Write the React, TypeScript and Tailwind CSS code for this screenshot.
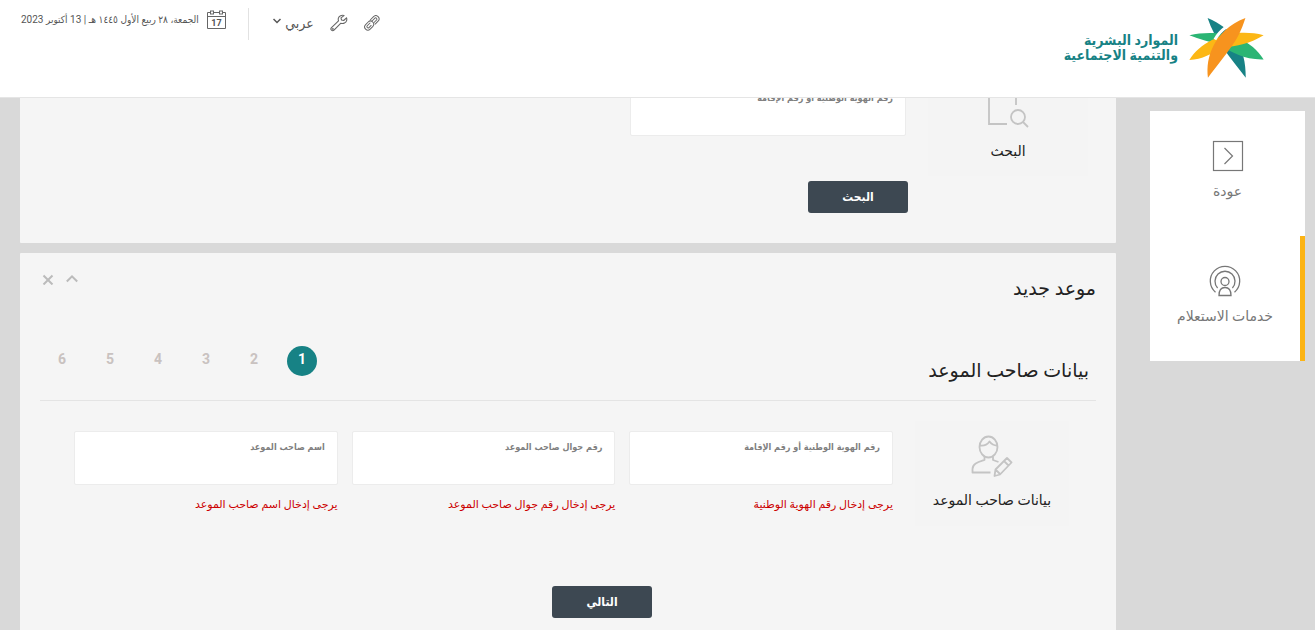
import type { ReactNode } from "react";

const steps = [1, 2, 3, 4, 5, 6];

const fields = [
  { id: "national-id", label: "رقم الهوية الوطنية أو رقم الإقامة", error: "يرجى إدخال رقم الهوية الوطنية" },
  { id: "mobile", label: "رقم جوال صاحب الموعد", error: "يرجى إدخال رقم جوال صاحب الموعد" },
  { id: "owner-name", label: "اسم صاحب الموعد", error: "يرجى إدخال اسم صاحب الموعد" },
];

function Logo() {
  return (
    <svg viewBox="416 50 224 184" className="w-[75px] h-[61px]" aria-hidden="true">
      <path d="M471 53C545 84 588 140 586 233C540 172 492 120 471 53Z" fill="#178285" />
      <path d="M416 105C490 88 590 98 640 178C585 180 540 155 510 136C480 124 445 118 416 105Z" fill="#2bb574" />
      <path d="M416 180C455 115 550 82 640 105C600 130 560 138 515 142C485 160 455 178 416 180Z" fill="#fcb715" />
      <path d="M583 53C537 68 507 92 493 118" fill="none" stroke="#fff" strokeWidth="9" />
      <path d="M585 53C535 72 505 105 488 138C473 168 468 200 472 233C500 195 520 172 535 150C560 118 574 88 585 53Z" fill="#f7931e" />
    </svg>
  );
}

function LinkIcon() {
  return (
    <svg viewBox="0 0 16 16" className="w-4 h-4" fill="none" stroke="#666" strokeWidth="1" strokeLinecap="round">
      <g transform="rotate(-45 8 8)">
        <rect x="-.8" y="4.600" width="10" height="6.400" rx="3.200" />
        <path d="M6.600 6.600H2.400a1.300 1.300 0 0 0 0 2.500h3.200" />
        <path d="M9.200 4.600H13.600a3.200 3.200 0 0 1 0 6.400H9.500" />
        <path d="M9.800 6.600h3.800a1.300 1.300 0 0 1 0 2.500H9.800" />
      </g>
    </svg>
  );
}

function WrenchIcon() {
  return (
    <svg viewBox="0 0 18 18" className="w-[18px] h-[18px]" fill="none" stroke="#666" strokeWidth="1.1" strokeLinejoin="round">
      <path d="M14 1.6c-2.3-.9-4.900.2-5.600 2.500-.3 1-.2 1.900.1 2.700L1.500 13.700c-.7.7-.7 1.800 0 2.500s1.800.7 2.500 0l6.900-7c2.400.9 5.200-.4 5.800-2.900.2-.9.100-1.700-.2-2.500l-2.800 2.700-2.200-.5-.5-2.100z" />
      <circle cx="2.900" cy="14.900" r=".4" />
    </svg>
  );
}

function CalendarIcon() {
  return (
    <svg viewBox="0 0 19 20" className="w-[19px] h-5" fill="none" stroke="#666" strokeWidth="1">
      <path d="M3.500 2.500H.5v16h18v-16h-3M6.500 2.500h6M.5 6.500h18" />
      <rect x="3.500" y="1" width="3" height="3" />
      <rect x="12.500" y="1" width="3" height="3" />
      <text x="9.500" y="16" textAnchor="middle" fontSize="9" fontWeight="700" fill="#555" stroke="none" fontFamily="Roboto, sans-serif">17</text>
    </svg>
  );
}

function BackIcon() {
  return (
    <svg viewBox="0 0 32 32" className="w-8 h-8" fill="none" stroke="#777" strokeWidth="1.2">
      <rect x="1.500" y="1.500" width="29" height="29" />
      <path d="M12.500 8l8 8-8 8" />
    </svg>
  );
}

function InquiryIcon() {
  return (
    <svg viewBox="0 0 32 32" className="w-8 h-8" fill="none" stroke="#777" strokeWidth="1.300">
      <path d="M6.500 27.200a14.700 14.700 0 1 1 19 0" />
      <path d="M8.600 23a10 10 0 1 1 14.800 0" />
      <circle cx="16" cy="16.500" r="4" />
      <path d="M10 30.500c0-4.800 2.200-8 6-8s6 3.200 6 8z" />
    </svg>
  );
}

function SearchDocIcon() {
  return (
    <svg viewBox="0 0 42 42" className="w-[42px] h-[42px]" fill="none" stroke="#c4c4c4" strokeWidth="1.800">
      <path d="M20 38H2V2h18l9 9v8M20 2v9h9" />
      <circle cx="31" cy="31" r="7" />
      <path d="M36 36l5 5" />
    </svg>
  );
}

function UserEditIcon() {
  return (
    <svg viewBox="0 0 42 42" className="w-[42px] h-[42px]" fill="none" stroke="#c4c4c4" strokeWidth="1.800" strokeLinejoin="round">
      <ellipse cx="17.500" cy="12" rx="9" ry="10.500" />
      <path d="M9 10.500c3.500.5 7-.5 9.500-4 2 2.700 4.500 4 7.500 4" />
      <path d="M13.500 21.500v3.500c-6 2-12 3.500-12 9V37.500h18M22 21.500v3.500l5.500 2" />
      <path d="M23.500 41l1-6.500L36 23l4.500 4.500L29 39.500zM33 26l4.500 4.500M24.500 34.500l4.500 4.500" />
    </svg>
  );
}

function Field({ id, label, error }: { id: string; label: string; error?: string }) {
  return (
    <div>
      <div className="flex h-[54px] flex-col rounded-xs border border-[#ececec] bg-white px-3 pt-[7px]">
        <label htmlFor={id} className="font-['DejaVu_Sans_Condensed','DejaVu_Sans',sans-serif] text-[9px] leading-4 font-bold text-[#808080]">{label}</label>
        <input id={id} type="text" className="min-h-0 w-full flex-1 bg-transparent text-xs outline-none" />
      </div>
      {error && <p className="mt-[10px] text-[11px] leading-5 whitespace-nowrap text-[#cc0000]">{error}</p>}
    </div>
  );
}

function StepCard({ icon, title }: { icon: ReactNode; title: string }) {
  return (
    <div className="flex h-[105px] w-[154px] shrink-0 flex-col items-center bg-[#f4f4f4] pt-[14px]">
      {icon}
      <h3 className="mt-[13px] text-sm leading-5 whitespace-nowrap text-[#222]">{title}</h3>
    </div>
  );
}

function ActionButton({ children }: { children: ReactNode }) {
  return (
    <button type="button" className="h-8 w-[100px] rounded-[3px] bg-[#3d4852] font-['DejaVu_Sans_Condensed','DejaVu_Sans',sans-serif] text-xs font-bold text-white">
      {children}
    </button>
  );
}

export default function App() {
  return (
    <div dir="rtl" lang="ar" className="flex h-screen flex-col overflow-hidden bg-[#d9d9d9] font-['Roboto','DejaVu_Sans',sans-serif] text-[#222]">
      <header className="relative z-10 flex h-[98px] shrink-0 items-start justify-between border-b border-[#e5e5e5] bg-white pr-[51px] pl-[21px] font-['Roboto','DejaVu_Sans_Condensed','DejaVu_Sans',sans-serif]">
        <a href="#" className="flex items-start gap-[11px] pt-[17px]">
          <Logo />
          <span className="pt-4 text-sm leading-[15px] font-bold text-[#178285]">
            الموارد البشرية
            <br />
            والتنمية الاجتماعية
          </span>
        </a>
        <div className="flex items-start pt-2 text-[#555]">
          <div className="flex h-[30px] items-center gap-4">
            <a href="#" aria-label="روابط"><LinkIcon /></a>
            <a href="#" aria-label="أدوات"><WrenchIcon /></a>
            <div className="flex items-center gap-1">
              <select aria-label="اللغة" className="appearance-none bg-transparent text-sm outline-none">
                <option>عربي</option>
              </select>
              <svg viewBox="0 0 8 6" className="mb-1 h-[6px] w-2" fill="none" stroke="#555" strokeWidth="1.500">
                <path d="M.5 1L4 4.500 7.500 1" />
              </svg>
            </div>
          </div>
          <div className="mr-6 ml-[22px] h-8 w-px bg-[#e2e2e2]" />
          <div className="flex items-center gap-2">
            <CalendarIcon />
            <time dateTime="2023-10-13" className="text-[10px] leading-6 whitespace-nowrap">الجمعة، ٢٨ ربيع الأول ١٤٤٥ هـ | 13 أكتوبر 2023</time>
          </div>
        </div>
      </header>

      <div className="flex min-h-0 flex-1 items-start gap-[34px] pr-[10px] pl-5">
        <nav className="mt-[13px] w-[155px] shrink-0 bg-white text-sm text-[#777]">
          <a href="#" className="flex h-[125px] flex-col items-center pt-[29px]">
            <BackIcon />
            <span className="mt-[9px] leading-5">عودة</span>
          </a>
          <a href="#" className="flex h-[125px] flex-col items-center border-r-[5px] border-[#fcb415] pt-[29px]">
            <InquiryIcon />
            <span className="mt-[9px] leading-5">خدمات الاستعلام</span>
          </a>
        </nav>

        <main className="-mt-[45px] min-w-0 flex-1">
          <section className="mb-[10px] h-[190px] rounded-[1px] bg-[#f5f5f5] pr-7">
            <div className="flex items-start">
              <div className="mt-[19px] flex h-[104px] w-40 shrink-0 flex-col items-center bg-[#f4f4f4] pt-[14px]">
                <SearchDocIcon />
                <h3 className="mt-[13px] text-sm leading-5">البحث</h3>
              </div>
              <div className="mt-[29px] mr-[22px] w-[276px]">
                <Field id="search-id" label="رقم الهوية الوطنية أو رقم الإقامة" />
              </div>
            </div>
            <div className="mt-[5px] pr-[180px]">
              <ActionButton>البحث</ActionButton>
            </div>
          </section>

          <section className="h-[460px] rounded-[1px] bg-[#f5f5f5] px-5 pt-5">
            <div className="flex items-start justify-between">
              <h1 className="text-[19px] leading-8">موعد جديد</h1>
              <div className="flex gap-3 pl-[2px]">
                <button type="button" aria-label="طي" className="h-3 w-3">
                  <svg viewBox="0 0 12 12" fill="none" stroke="#bbb" strokeWidth="2"><path d="M.8 8.500L6 3.300l5.200 5.200" /></svg>
                </button>
                <button type="button" aria-label="إغلاق" className="h-3 w-3">
                  <svg viewBox="0 0 12 12" fill="none" stroke="#bbb" strokeWidth="2"><path d="M1.500 2.500l9 9M10.500 2.500l-9 9" /></svg>
                </button>
              </div>
            </div>

            <div className="mt-[41px] flex h-[55px] items-start justify-between border-b border-[#e4e4e4] px-[7px]">
              <h2 className="pt-[9px] text-[19px] leading-8">بيانات صاحب الموعد</h2>
              <ol className="flex gap-[18px]">
                {steps.map((step) => (
                  <li key={step}>
                    <button
                      type="button"
                      aria-current={step === 1 ? "step" : undefined}
                      className={step === 1
                        ? "h-[30px] w-[30px] rounded-full bg-[#178285] pb-1 text-sm font-bold text-white"
                        : "h-[30px] w-[30px] pb-1 text-sm font-bold text-[#c9c2c0]"}
                    >
                      {step}
                    </button>
                  </li>
                ))}
              </ol>
            </div>

            <form className="pt-5">
              <div className="flex items-start gap-[22px] pr-[27px] pl-[34px]">
                <StepCard icon={<UserEditIcon />} title="بيانات صاحب الموعد" />
                <div className="grid flex-1 grid-cols-3 gap-[14px] pt-[10px]">
                  {fields.map((field) => (
                    <Field key={field.id} {...field} />
                  ))}
                </div>
              </div>
              <div className="mt-[60px] flex justify-center pl-[68px]">
                <ActionButton>التالي</ActionButton>
              </div>
            </form>
          </section>
        </main>
      </div>
    </div>
  );
}
